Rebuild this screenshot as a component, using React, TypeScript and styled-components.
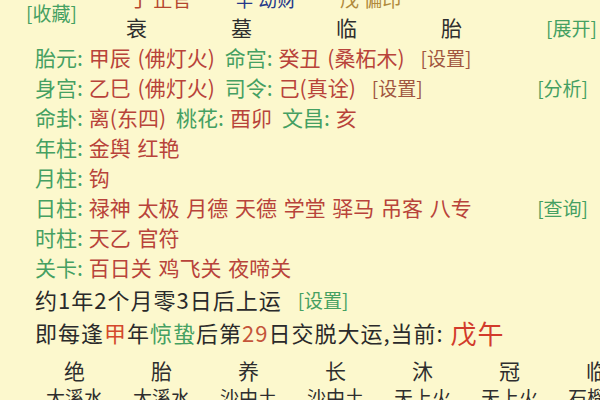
import styled, { createGlobalStyle } from "styled-components";

const GlobalStyle = createGlobalStyle`
  html, body {
    margin: 0;
    padding: 0;
    background: #fcf8cd;
  }
  body {
    font-family: "Noto Sans CJK SC", "Noto Sans", sans-serif;
    color: #2a2a2a;
  }
`;

const green = "#45a062";
const red = "#b8433a";

const Page = styled.div`
  width: 600px;
  height: 400px;
  overflow: hidden;
  background: #fcf8cd;
`;
const Scroll = styled.div`
  margin-top: -14px;
`;
const Header = styled.div`
  display: grid;
  grid-template-columns: 126px 105px 105px 105px 105px 1fr;
  grid-template-rows: 26px 30px;
  align-items: center;
`;
const HeaderLeft = styled.div`
  grid-row: 1 / span 2;
  padding-left: 26px;
  margin-bottom: 4px;
  align-self: center;
`;
const Pillar = styled.span<{ $color: string }>`
  font-size: 19px;
  color: ${({ $color }) => $color};
  padding-left: 4px;
  line-height: 26px;
`;
const Stage = styled.span`
  font-size: 21px;
  color: #2e2e2e;
  line-height: 30px;
`;
const Action = styled.span<{ $color?: string; $gap?: number }>`
  font-size: 19px;
  letter-spacing: 0;
  color: ${({ $color }) => $color ?? green};
  margin-left: ${({ $gap }) => $gap ?? 0}px;
  white-space: nowrap;
`;
const HeaderRight = styled.div`
  justify-self: end;
  padding-right: 12px;
`;
const Row = styled.div<{ $h?: number; $size?: number; $spacing?: number }>`
  height: ${({ $h }) => $h ?? 30}px;
  display: flex;
  align-items: center;
  justify-content: space-between;
  padding: 0 12px 0 35px;
  font-size: ${({ $size }) => $size ?? 21}px;
  letter-spacing: ${({ $spacing }) => $spacing ?? 0}px;
  white-space: nowrap;
`;
const Line = styled.div`
  display: flex;
  align-items: center;
`;
const Label = styled.span`
  color: ${green};
  margin-right: 6px;
`;
const Value = styled.span`
  color: ${red};
  margin-right: 10px;
  word-spacing: 2px;
`;
const Plain = styled.span<{ $color?: string; $size?: number }>`
  color: ${({ $color }) => $color ?? "#2a2a2a"};
  font-size: ${({ $size }) => ($size ? `${$size}px` : "inherit")};
`;
const Table = styled.div<{ $top?: number; $h: number; $size: number }>`
  display: grid;
  grid-template-columns: repeat(7, 87px);
  grid-template-rows: ${({ $h }) => $h}px;
  padding-left: 31px;
  margin-top: ${({ $top }) => $top ?? 0}px;
  align-items: center;
  font-size: ${({ $size }) => $size}px;
  line-height: ${({ $h }) => $h}px;
  color: #2e2e2e;
`;
const Cell = styled.span`
  text-align: center;
  white-space: nowrap;
`;

type TItem = { label: string; value: string };
const rows: { items: TItem[]; setting?: boolean; action?: string }[] = [
  {
    items: [
      { label: "胎元:", value: "甲辰 (佛灯火)" },
      { label: "命宫:", value: "癸丑 (桑柘木)" },
    ],
    setting: true,
  },
  {
    items: [
      { label: "身宫:", value: "乙巳 (佛灯火)" },
      { label: "司令:", value: "己(真诠)" },
    ],
    setting: true,
    action: "[分析]",
  },
  {
    items: [
      { label: "命卦:", value: "离(东四)" },
      { label: "桃花:", value: "酉卯" },
      { label: "文昌:", value: "亥" },
    ],
  },
  { items: [{ label: "年柱:", value: "金舆 红艳" }] },
  { items: [{ label: "月柱:", value: "钩" }] },
  {
    items: [{ label: "日柱:", value: "禄神 太极 月德 天德 学堂 驿马 吊客 八专" }],
    action: "[查询]",
  },
  { items: [{ label: "时柱:", value: "天乙 官符" }] },
  { items: [{ label: "关卡:", value: "百日关 鸡飞关 夜啼关" }] },
];

const pillars = [
  { text: "丁 正官", color: "#b5472f" },
  { text: "辛 劫财", color: "#26398a" },
  { text: "戊 偏印", color: "#b08a3c" },
  { text: "", color: "#333" },
];
const stages = ["衰", "墓", "临", "胎"];
const cycle = ["绝", "胎", "养", "长", "沐", "冠", "临"];
const nayin = ["大溪水", "大溪水", "沙中土", "沙中土", "天上火", "天上火", "石榴木"];

export default function App() {
  return (
    <Page>
      <GlobalStyle />
      <Scroll>
        <Header>
          <HeaderLeft>
            <Action>[收藏]</Action>
          </HeaderLeft>
          {pillars.map((p, i) => (
            <Pillar key={i} $color={p.color}>
              {p.text}
            </Pillar>
          ))}
          <span />
          {stages.map((s) => (
            <Stage key={s}>{s}</Stage>
          ))}
          <HeaderRight>
            <Action>[展开]</Action>
          </HeaderRight>
        </Header>
        {rows.map((r, i) => (
          <Row key={i}>
            <Line>
              {r.items.map((it) => (
                <span key={it.label}>
                  <Label>{it.label}</Label>
                  <Value>{it.value}</Value>
                </span>
              ))}
              {r.setting && (
                <Action $color="#a0553f" $gap={6}>
                  [设置]
                </Action>
              )}
            </Line>
            {r.action && <Action>{r.action}</Action>}
          </Row>
        ))}
        <Row $h={34} $size={22} $spacing={1}>
          <Line>
            <Plain>约1年2个月零3日后上运</Plain>
            <Action $gap={16}>[设置]</Action>
          </Line>
        </Row>
        <Row $h={32} $size={22} $spacing={1}>
          <Line>
            <Plain>即每逢</Plain>
            <Plain $color="#d4482c">甲</Plain>
            <Plain>年</Plain>
            <Plain $color={green}>惊蛰</Plain>
            <Plain>后第</Plain>
            <Plain $color="#c4553a">29</Plain>
            <Plain>日交脱大运,当前: </Plain>
            <Plain $color="#d23b2b" $size={26}>
              &nbsp;戊午
            </Plain>
          </Line>
        </Row>
        <Table $top={8} $h={28} $size={21}>
          {cycle.map((c, i) => (
            <Cell key={i}>{c}</Cell>
          ))}
        </Table>
        <Table $h={26} $size={19}>
          {nayin.map((c, i) => (
            <Cell key={i}>{c}</Cell>
          ))}
        </Table>
      </Scroll>
    </Page>
  );
}
